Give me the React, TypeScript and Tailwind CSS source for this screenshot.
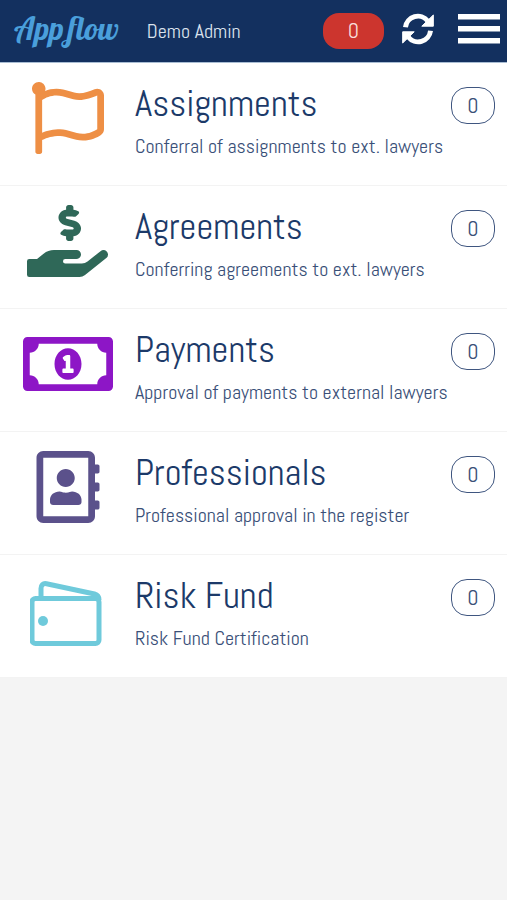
import * as React from "react";
import {
    FaHandHoldingUsd,
    FaRegAddressBook,
    FaRegFlag,
    FaRegMoneyBillAlt,
} from "react-icons/fa";

interface MenuItemProps {
    title: string;
    description: string;
    count: number;
    icon: React.ReactNode;
}

function WalletIcon() {
    return (
        <svg viewBox="0 0 76 72" className="h-[72px] w-[76px]" fill="none" stroke="#6fcadb" strokeWidth="5" strokeLinejoin="round">
            <rect x="2" y="24.500" width="67" height="45" rx="3.5" />
            <path d="M11 24V14.500c0-3.500 2-5.500 5.500-4.800l48 10.300c3 .8 4.500 2 4.500 6" />
            <circle cx="13" cy="47" r="5" fill="#6fcadb" stroke="none" />
        </svg>
    );
}

function RefreshIcon() {
    return (
        <svg viewBox="0 0 97 97" className="h-8 w-8" aria-hidden="true">
            <g fill="none" stroke="#ffffff" strokeWidth="15">
                <path d="M10.500 43A38 38 0 0 1 78 24" />
                <path d="M86.500 54A38 38 0 0 1 19 73" />
            </g>
            <g fill="#ffffff" stroke="#ffffff" strokeWidth="3" strokeLinejoin="round">
                <path d="M95 6v34H60z" />
                <path d="M2 91V57h35z" />
            </g>
        </svg>
    );
}

function MenuIcon() {
    return (
        <svg viewBox="0 0 42 30" className="h-[30px] w-[42px]" fill="#ffffff" aria-hidden="true">
            <rect y="0" width="42" height="5.500" />
            <rect y="12" width="42" height="5.500" />
            <rect y="24" width="42" height="5.500" />
        </svg>
    );
}

const items: MenuItemProps[] = [
    {
        title: "Assignments",
        description: "Conferral of assignments to ext. lawyers",
        count: 0,
        icon: <FaRegFlag className="h-[72px] w-[72px] text-[#ee8f45]" />,
    },
    {
        title: "Agreements",
        description: "Conferring agreements to ext. lawyers",
        count: 0,
        icon: <FaHandHoldingUsd className="h-[72px] w-[81px] text-[#2f6858]" />,
    },
    {
        title: "Payments",
        description: "Approval of payments to external lawyers",
        count: 0,
        icon: <FaRegMoneyBillAlt className="h-[72px] w-[90px] text-[#8d16c6]" />,
    },
    {
        title: "Professionals",
        description: "Professional approval in the register",
        count: 0,
        icon: <FaRegAddressBook className="h-[72px] w-[72px] text-[#5b518b]" />,
    },
    {
        title: "Risk Fund",
        description: "Risk Fund Certification",
        count: 0,
        icon: <WalletIcon />,
    },
];

function MenuItem({ title, description, count, icon }: MenuItemProps) {
    return (
        <li className="border-b border-[#f3f3f3] bg-white">
            <a href="#" className="flex items-start pt-[19px] pr-3 pb-[19px] text-[#1c3a69]">
                <div className="flex h-[72px] w-[135px] shrink-0 items-center justify-center">{icon}</div>
                <div className="min-w-0 flex-1 pb-2">
                    <h2 className="text-[37px] leading-[44px]">{title}</h2>
                    <p className="pt-2 text-[20px] leading-6 whitespace-nowrap text-[#3a5078]">{description}</p>
                </div>
                <span className="mt-[5px] flex h-[37px] w-11 shrink-0 items-center justify-center rounded-2xl border border-[#3f5680] text-[22px] text-[#3a5078]">
                    {count}
                </span>
            </a>
        </li>
    );
}

export default function App() {
    return (
        <div className="min-h-screen bg-[#f4f4f4] font-['Abel','Liberation_Sans_Narrow','Roboto',sans-serif]">
            <header className="flex h-[63px] items-center border-b border-[#a9bdd3] bg-[#13305f] pr-[7px] pl-[14px] text-white">
                <span className="flex gap-1 pb-1 font-['Lobster','Liberation_Serif',serif] text-[31px] leading-9 text-[#4a9fdb]">
                    <span>App</span>
                    <span>flow</span>
                </span>
                <span className="ml-7 text-[20px] text-[#dbe3ee]">Demo Admin</span>
                <span className="ml-auto flex h-9 w-[61px] items-center justify-center rounded-2xl bg-[#cc352e] pb-px text-[22px] text-[#f8dcda]">0</span>
                <button type="button" aria-label="Refresh" className="ml-[18px] pb-1">
                    <RefreshIcon />
                </button>
                <button type="button" aria-label="Menu" className="ml-6 pb-1">
                    <MenuIcon />
                </button>
            </header>
            <ul>
                {items.map((item) => (
                    <MenuItem key={item.title} {...item} />
                ))}
            </ul>
        </div>
    );
}
